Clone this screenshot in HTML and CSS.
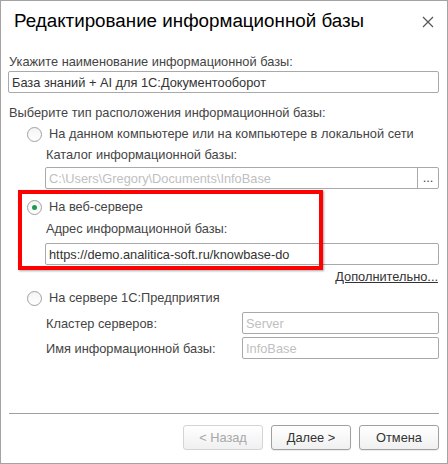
FILE: index.html
```html
<!DOCTYPE html>
<html lang="ru">
<head>
<meta charset="utf-8">
<title>Редактирование информационной базы</title>
<link rel="stylesheet" href="styles.css">
</head>
<body>
<div class="dialog">
  <div class="titlebar">
    <div class="title">Редактирование информационной базы</div>
    <svg class="close" width="12" height="12" viewBox="0 0 12 12"><path d="M1 1L11 11M11 1L1 11" stroke="#555" stroke-width="1.2" fill="none"/></svg>
  </div>
  <div class="form">
    <div class="row label top">Укажите наименование информационной базы:</div>
    <div class="field f-name"><span class="value">База знаний + AI для 1С:Документооборот</span></div>
    <div class="row label l-type">Выберите тип расположения информационной базы:</div>
    <div class="row radio r-local"><span class="circle"></span><span>На данном компьютере или на компьютере в локальной сети</span></div>
    <div class="row label sub l-cat">Каталог информационной базы:</div>
    <div class="field sub with-btn f-cat"><span class="value placeholder">C:\Users\Gregory\Documents\InfoBase</span><span class="dots">...</span></div>
    <div class="row radio r-web"><span class="circle checked"></span><span>На веб-сервере</span></div>
    <div class="row label sub l-addr">Адрес информационной базы:</div>
    <div class="field sub f-addr"><span class="value">https://demo.analitica-soft.ru/knowbase-do</span></div>
    <div class="row link-row"><span class="link">Дополнительно...</span></div>
    <div class="row radio r-srv"><span class="circle"></span><span>На сервере 1С:Предприятия</span></div>
    <div class="pair p-cluster"><span class="plabel">Кластер серверов:</span><div class="field small"><span class="value placeholder">Server</span></div></div>
    <div class="pair p-ib"><span class="plabel">Имя информационной базы:</span><div class="field small"><span class="value placeholder">InfoBase</span></div></div>
    <div class="highlight"></div>
  </div>
  <div class="footer">
    <div class="sep"></div>
    <div class="buttons">
      <div class="btn disabled">&lt; Назад</div>
      <div class="btn">Далее &gt;</div>
      <div class="btn">Отмена</div>
    </div>
  </div>
</div>
</body>
</html>
```

FILE: styles.css
```css
* { box-sizing: border-box; }
html, body { margin: 0; padding: 0; background: #fff; }
body {
  font-family: "Liberation Sans", Arial, sans-serif;
  font-size: 12.8px;
  color: #444;
}
.dialog {
  width: 448px;
  height: 464px;
  border: 1px solid #a3a3a3;
  display: flex;
  flex-direction: column;
  background: #fff;
}
.titlebar {
  height: 53px;
  display: flex;
  align-items: flex-start;
  justify-content: space-between;
  padding: 9px 13px 0 13px;
}
.title {
  font-size: 18.8px;
  color: #000;
  line-height: 22px;
}
.close { margin-top: 6px; margin-right: 0px; }
.form {
  position: relative;
  padding: 0 8px 0 7px;
  display: flex;
  flex-direction: column;
}
.row {
  height: 16px;
  line-height: 16px;
  display: flex;
  align-items: center;
  white-space: nowrap;
}
.label { padding-left: 1px; }
.label.sub { padding-left: 38px; }
.field {
  height: 22px;
  border: 1px solid #a9a9a9;
  border-radius: 2px;
  display: flex;
  align-items: center;
  padding-left: 3px;
  color: #333;
  background: #fff;
  white-space: nowrap;
}
.field.sub { margin-left: 37px; }
.placeholder { color: #c0c0c0; }
.with-btn { padding-right: 0; }
.with-btn .value { flex: 1; }
.dots {
  width: 21px;
  height: 100%;
  border-left: 1px solid #a9a9a9;
  display: flex;
  align-items: center;
  justify-content: center;
  color: #444;
  padding-bottom: 2px;
}
.f-name { margin-top: 1px; }
.l-type { margin-top: 12px; }
.r-local { margin-top: 5px; }
.l-cat { margin-top: 5px; }
.f-cat { margin-top: 4px; }
.r-web { margin-top: 10px; }
.l-addr { margin-top: 6px; }
.f-addr { margin-top: 6px; }
.link-row { margin-top: 4px; justify-content: flex-end; padding-right: 1px; }
.r-srv { margin-top: 5px; }
.p-cluster { margin-top: 6px; }
.p-ib { margin-top: 3px; }

.radio { padding-left: 19px; gap: 7px; }
.circle {
  width: 15px;
  height: 15px;
  border-radius: 50%;
  border: 1px solid #a0a0a0;
  background: linear-gradient(#f4f4f4, #fff);
  display: flex;
  align-items: center;
  justify-content: center;
  flex: none;
}
.circle.checked::after {
  content: "";
  width: 5px;
  height: 5px;
  border-radius: 50%;
  background: #1d9a4d;
}
.link {
  color: #333;
  text-decoration: underline;
}
.pair {
  display: flex;
  align-items: center;
  height: 22px;
  padding-left: 38px;
}
.plabel { width: 196px; flex: none; }
.field.small { flex: 1; }

.highlight {
  position: absolute;
  left: 17px;
  top: 136px;
  width: 305px;
  height: 80px;
  border: 4px solid #ff0000;
  box-shadow: 1px 1px 2px rgba(0,0,0,0.35);
  pointer-events: none;
}

.footer {
  margin-top: auto;
  padding: 0 8px 13px 8px;
}
.sep {
  height: 1px;
  background: #a0a0a0;
  margin-bottom: 11px;
}
.buttons {
  display: flex;
  justify-content: flex-end;
  gap: 8px;
}
.btn {
  width: 80px;
  height: 25px;
  border: 1px solid #a0a0a0;
  border-radius: 3px;
  background: linear-gradient(#ffffff, #f0f0f0);
  display: flex;
  align-items: center;
  justify-content: center;
  color: #333;
  box-shadow: 0 1px 1px rgba(0,0,0,0.08);
}
.btn.disabled {
  border-color: #d4d4d4;
  color: #a8a8a8;
  box-shadow: none;
}
```
